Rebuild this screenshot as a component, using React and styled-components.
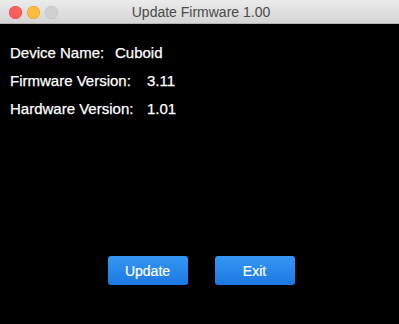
import React from "react";
import styled, { createGlobalStyle } from "styled-components";

const Global = createGlobalStyle`
  html, body { margin: 0; padding: 0; background: #000; }
  body { font-family: "Liberation Sans", Arial, sans-serif; }
`;

const Window = styled.div`
  width: 399px;
  height: 324px;
  display: flex;
  flex-direction: column;
  background: #000;
  overflow: hidden;
`;

const TitleBar = styled.div`
  position: relative;
  height: 24px;
  flex: none;
  display: flex;
  align-items: center;
  justify-content: center;
  background: linear-gradient(#ebebeb, #d5d5d5);
  border-bottom: 1px solid #b4b4b4;
  box-sizing: border-box;
`;

const Lights = styled.div`
  position: absolute;
  left: 9px;
  top: 6px;
  display: flex;
  gap: 5px;
`;

const Light = styled.span`
  width: 13px;
  height: 13px;
  border-radius: 50%;
  background: ${(p) => p.$c};
  box-shadow: inset 0 0 0 0.5px ${(p) => p.$b};
`;

const Title = styled.div`
  font-size: 14px;
  color: #4a4a4a;
  margin-left: 3px;
`;

const Body = styled.div`
  flex: 1;
  display: flex;
  flex-direction: column;
  padding: 20px 10px 0 10px;
`;

const Row = styled.div`
  display: flex;
  align-items: baseline;
  height: 28px;
  color: #fff;
  font-size: 15px;
  -webkit-text-stroke: 0.25px #fff;
`;

const Label = styled.span`
  width: ${(p) => p.$w}px;
`;

const Buttons = styled.div`
  margin-top: auto;
  margin-bottom: 39px;
  display: flex;
  justify-content: center;
  gap: 27px;
  padding-left: 3px;
`;

const Button = styled.button`
  width: 80px;
  height: 29px;
  border: none;
  border-radius: 3px;
  background: linear-gradient(#3397f3, #1c78e3);
  color: #fff;
  font-family: "Liberation Sans", Arial, sans-serif;
  font-size: 14px;
  -webkit-text-stroke: 0.2px #fff;
  padding: 0;
`;

export default function App() {
  return (
    <>
      <Global />
      <Window>
        <TitleBar>
          <Lights>
            <Light $c="#fc605c" $b="#de4a45" />
            <Light $c="#fdbc40" $b="#de9f2d" />
            <Light $c="#d0d0d0" $b="#bdbdbd" />
          </Lights>
          <Title>Update Firmware 1.00</Title>
        </TitleBar>
        <Body>
          <Row>
            <Label $w={105}>Device Name:</Label>
            <span>Cuboid</span>
          </Row>
          <Row>
            <Label $w={137}>Firmware Version:</Label>
            <span>3.11</span>
          </Row>
          <Row>
            <Label $w={137}>Hardware Version:</Label>
            <span>1.01</span>
          </Row>
          <Buttons>
            <Button>Update</Button>
            <Button>Exit</Button>
          </Buttons>
        </Body>
      </Window>
    </>
  );
}
